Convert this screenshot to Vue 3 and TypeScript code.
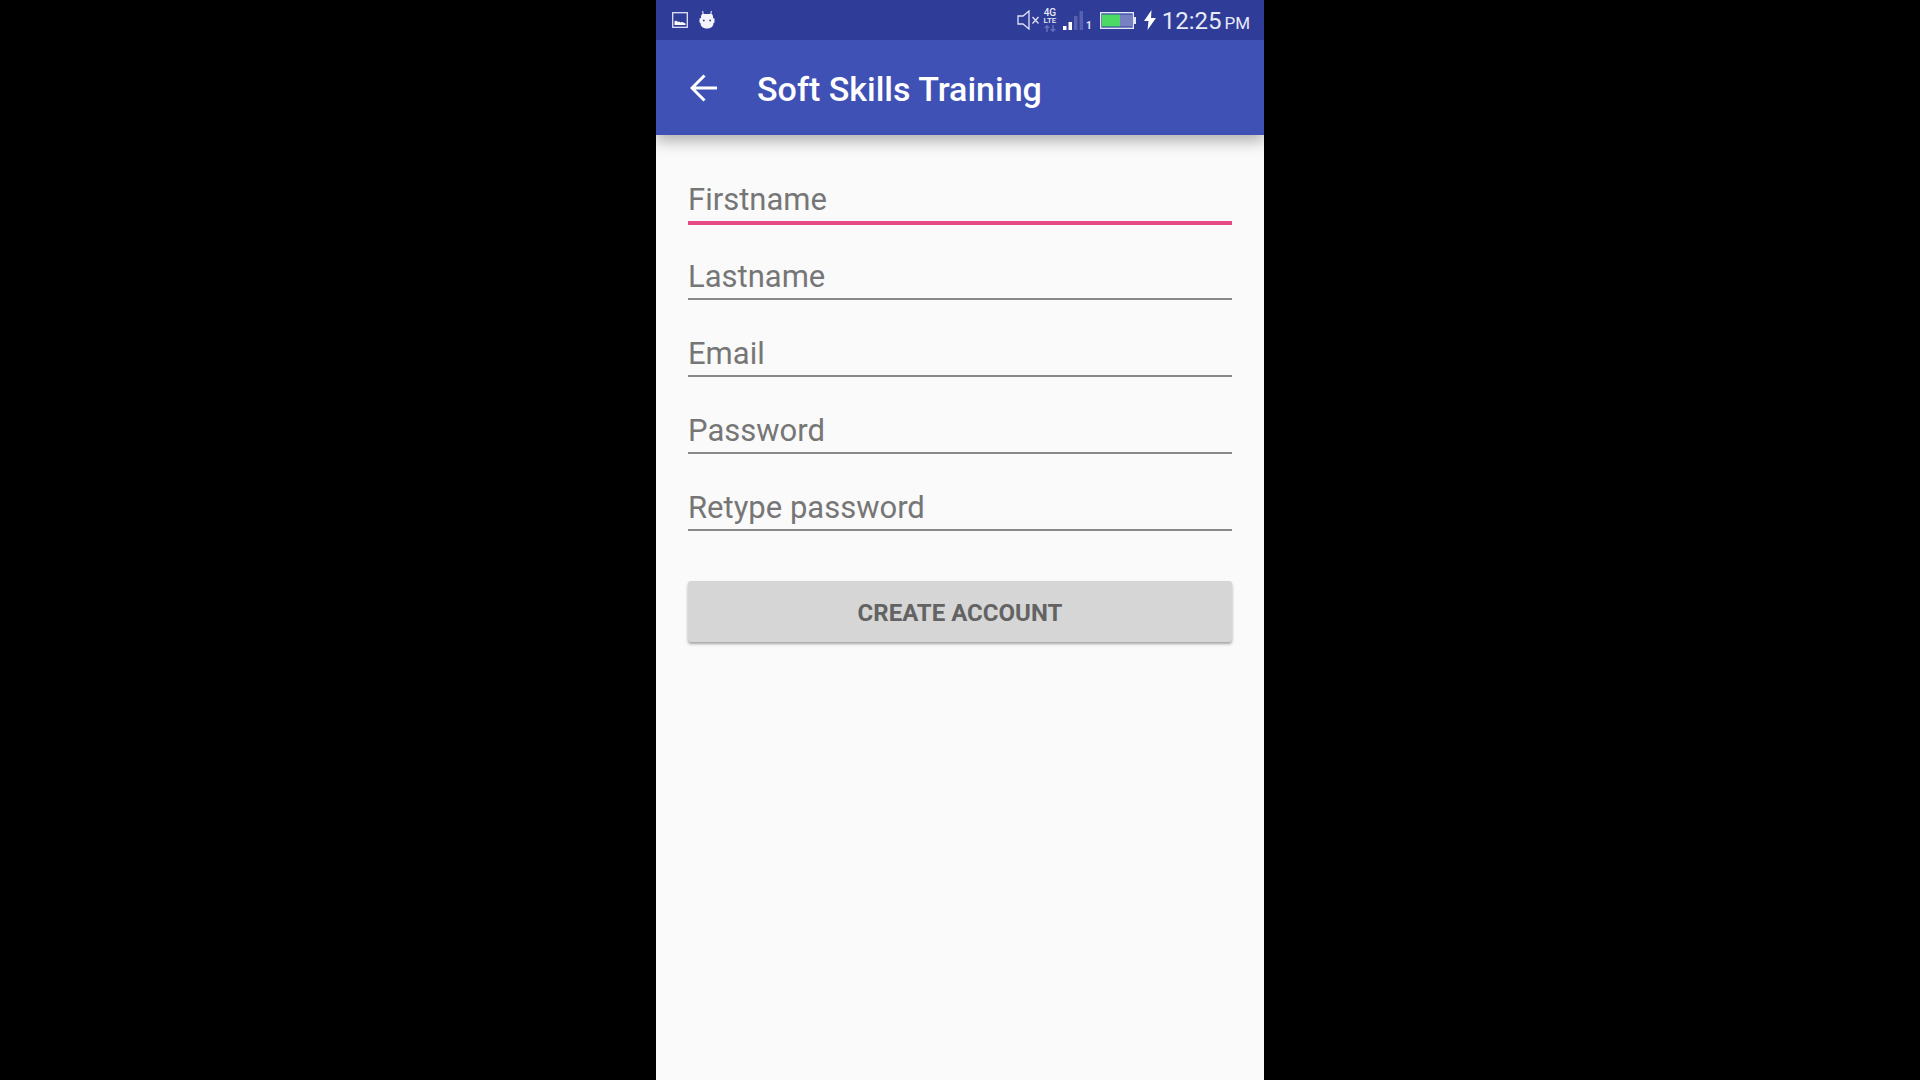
<script setup lang="ts">
import { reactive, ref } from 'vue'

type FieldId = 'firstname' | 'lastname' | 'email' | 'password' | 'retype'

interface Field {
  id: FieldId
  label: string
  type: string
}

const fields: Field[] = [
  { id: 'firstname', label: 'Firstname', type: 'text' },
  { id: 'lastname', label: 'Lastname', type: 'text' },
  { id: 'email', label: 'Email', type: 'email' },
  { id: 'password', label: 'Password', type: 'password' },
  { id: 'retype', label: 'Retype password', type: 'password' },
]

const form = reactive<Record<FieldId, string>>({
  firstname: '',
  lastname: '',
  email: '',
  password: '',
  retype: '',
})

const active = ref<FieldId>('firstname')
</script>

<template>
  <div class="screen">
    <div class="status">
      <div class="notices">
        <svg width="16" height="16" viewBox="0 0 16 16" aria-hidden="true">
          <rect x="0.7" y="0.7" width="14.6" height="14.6" fill="none" stroke="#dfe3f5" stroke-width="1.3" />
          <path d="M2.5 13V9.500L4 8.500l2 1.500L7 9.500l1.500 1 1.500-.5 1.500.5 2 1V13z" fill="#fff" />
        </svg>
        <svg width="16" height="20" viewBox="0 0 16 20" aria-hidden="true">
          <path d="M3.500 1 4.500 5M12.500 1 11.500 5" stroke="#c3c9ea" stroke-width="1.300" />
          <path d="M3 4h10l1 2v2l1.500.5v4L14.500 13c0 3-2 5.500-6.500 5.500S1.500 16 1.500 13L.5 12.500v-4L2 8V6z" fill="#f4f5fc" />
          <circle cx="4.800" cy="10.500" r="0.9" fill="#303f9f" />
          <circle cx="11.200" cy="10.500" r="0.9" fill="#303f9f" />
        </svg>
      </div>
      <div class="indicators">
        <svg width="23" height="20" viewBox="0 0 23 20" fill="none" stroke="#dfe3f5" stroke-width="1.300" aria-hidden="true">
          <path d="M1 6h5l6-5v18l-6-5H1z" />
          <path d="m15.500 7 6 6.500m0-6.500-6 6.500" />
        </svg>
        <div class="network">
          <span class="gen">4G</span>
          <span class="lte">LTE</span>
          <svg width="12" height="7" viewBox="0 0 12 7" fill="none" stroke="#6670ba" stroke-width="1.500" aria-hidden="true">
            <path d="M3 7V1M.8 3 3 .8 5.200 3M9 0v6M6.800 4 9 6.200 11.200 4" />
          </svg>
        </div>
        <div class="signal">
          <svg width="20" height="19" viewBox="0 0 20 19" aria-hidden="true">
            <path d="M0 15h3.500v4H0zM5.500 11H9v8H5.500z" fill="#fff" />
            <path d="M11 5h3.500v14H11zM16.500 0H20v19h-3.500z" fill="#5661b0" />
          </svg>
          <span class="sim">1</span>
        </div>
        <svg class="battery" width="36" height="17" viewBox="0 0 36 17" aria-hidden="true">
          <rect x="0.7" y="0.7" width="32.600" height="15.600" fill="#303f9f" stroke="#e4e7f6" stroke-width="1.400" />
          <path d="M2 2.500h18v12H2z" fill="#4cd964" />
          <path d="M20 2.500h12v12H20z" fill="#7780c1" />
          <path d="M34 5h2v7h-2z" fill="#e4e7f6" />
        </svg>
        <svg width="12" height="20" viewBox="0 0 12 20" aria-hidden="true">
          <path d="M7.500 0 0 11h4.500L3.500 20 12 8H7z" fill="#fff" />
        </svg>
        <time class="clock"><span>12:25</span><small>PM</small></time>
      </div>
    </div>

    <header class="appbar">
      <button type="button" class="back" aria-label="Back">
        <svg width="28" height="28" viewBox="0 0 28 28" fill="none" stroke="#fff" stroke-width="3" aria-hidden="true">
          <path d="M27 14H2M14.500 1.500 2 14l12.500 12.500" />
        </svg>
      </button>
      <h1>Soft Skills Training</h1>
    </header>

    <form class="form" @submit.prevent>
      <div v-for="f in fields" :key="f.id" class="field">
        <input
          :id="f.id"
          v-model="form[f.id]"
          :type="f.type"
          :placeholder="f.label"
          :aria-label="f.label"
          :class="{ active: active === f.id }"
          @focus="active = f.id"
        />
      </div>
      <button type="submit" class="submit">CREATE ACCOUNT</button>
    </form>
  </div>
</template>

<style>
body {
  margin: 0;
  background: #000;
}
</style>

<style scoped>
.screen {
  box-sizing: border-box;
  display: flex;
  flex-direction: column;
  width: 100%;
  max-width: 608px;
  min-height: 100vh;
  margin: 0 auto;
  background: #fafafa;
  font-family: Roboto, "Noto Sans", sans-serif;
}

.status {
  display: flex;
  align-items: center;
  justify-content: space-between;
  height: 40px;
  padding: 0 14px 0 16px;
  background: #2f3c98;
  color: #e8eaf8;
}

.status svg {
  display: block;
  flex: none;
}

.notices,
.indicators {
  display: flex;
  align-items: center;
}

.notices {
  gap: 11px;
}

.indicators {
  gap: 6px;
}

.network {
  display: flex;
  flex-direction: column;
  align-items: center;
  width: 14px;
  margin-left: -3px;
  font-weight: 500;
}

.gen {
  font-size: 10px;
  line-height: 9px;
}

.lte {
  font-size: 8px;
  line-height: 8px;
}

.signal {
  display: flex;
  align-items: flex-end;
  gap: 3px;
  margin-right: 2px;
}

.battery {
  margin-right: 2px;
}

.sim {
  font-size: 10px;
  font-weight: 700;
  line-height: 8px;
}

.clock {
  display: flex;
  align-items: baseline;
  gap: 3px;
  padding-top: 4px;
  font-size: 24px;
  line-height: 36px;
}

.clock small {
  font-size: 17px;
}

.appbar {
  display: flex;
  align-items: center;
  gap: 39px;
  height: 95px;
  padding: 0 34px;
  background: #3f51b5;
  box-shadow: 0 6px 14px rgba(0, 0, 0, 0.3);
  color: #fff;
  clip-path: inset(0 0 -32px 0);
}

.back {
  padding: 0;
  border: 0;
  background: none;
  cursor: pointer;
}

.back svg {
  display: block;
}

h1 {
  margin: 0;
  padding-top: 2px;
  font-size: 34px;
  font-weight: 500;
  line-height: 40px;
}

.form {
  padding: 44px 32px 32px;
}

.field {
  height: 77px;
}

.field input {
  display: block;
  box-sizing: content-box;
  width: 100%;
  height: 40px;
  padding: 1px 0;
  border: 0;
  border-bottom: 2px solid #888;
  border-radius: 0;
  outline: 0;
  background: none;
  color: #212121;
  font: 400 31px/40px Roboto, "Noto Sans", sans-serif;
}

.field input.active {
  border-bottom: 4px solid #e64c83;
}

.field input::placeholder {
  color: #767676;
  opacity: 1;
}

.submit {
  display: block;
  width: 100%;
  height: 61px;
  margin-top: 17px;
  padding: 2px 0 0;
  border: 0;
  border-radius: 3px;
  background: #d6d6d6;
  box-shadow: 0 2px 3px rgba(0, 0, 0, 0.35);
  color: #636363;
  font: 700 24px/32px Roboto, "Noto Sans", sans-serif;
  cursor: pointer;
}
</style>
